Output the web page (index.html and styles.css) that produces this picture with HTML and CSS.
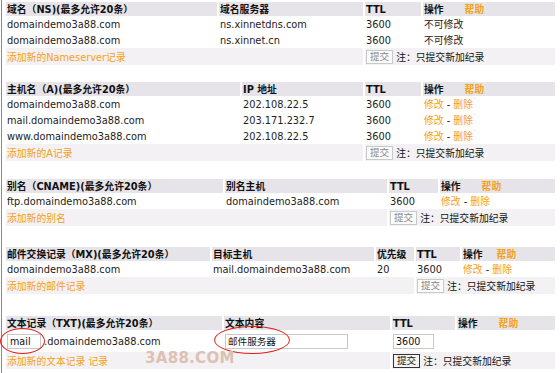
FILE: index.html
```html
<!DOCTYPE html>
<html>
<head>
  <meta charset="UTF-8">
  <title>域名解析管理</title>
  <link rel="stylesheet" href="styles.css">
</head>
<body>
<div class="page">

  <table class="dns t-ns">
    <colgroup><col class="c1"><col class="c2"><col class="c3"><col class="c4"></colgroup>
    <tr class="head">
      <th>域名（NS)(最多允许20条）</th><th>域名服务器</th><th>TTL</th><th>操作<span class="help">帮助</span></th>
    </tr>
    <tr><td>domaindemo3a88.com</td><td>ns.xinnetdns.com</td><td>3600</td><td>不可修改</td></tr>
    <tr><td>domaindemo3a88.com</td><td>ns.xinnet.cn</td><td>3600</td><td>不可修改</td></tr>
    <tr class="add">
      <td colspan="2"><a href="#">添加新的Nameserver记录</a></td>
      <td colspan="2"><button disabled>提交</button><span class="note">注：只提交新加纪录</span></td>
    </tr>
  </table>

  <table class="dns t-a">
    <colgroup><col class="c1"><col class="c2"><col class="c3"><col class="c4"></colgroup>
    <tr class="head">
      <th>主机名（A)(最多允许20条）</th><th>IP 地址</th><th>TTL</th><th>操作<span class="help">帮助</span></th>
    </tr>
    <tr><td>domaindemo3a88.com</td><td>202.108.22.5</td><td>3600</td><td><a href="#">修改</a> - <a href="#">删除</a></td></tr>
    <tr><td>mail.domaindemo3a88.com</td><td>203.171.232.7</td><td>3600</td><td><a href="#">修改</a> - <a href="#">删除</a></td></tr>
    <tr><td>www.domaindemo3a88.com</td><td>202.108.22.5</td><td>3600</td><td><a href="#">修改</a> - <a href="#">删除</a></td></tr>
    <tr class="add">
      <td colspan="2"><a href="#">添加新的A记录</a></td>
      <td colspan="2"><button disabled>提交</button><span class="note">注：只提交新加纪录</span></td>
    </tr>
  </table>

  <table class="dns t-cname">
    <colgroup><col class="c1"><col class="c2"><col class="c3"><col class="c4"></colgroup>
    <tr class="head">
      <th>别名（CNAME)(最多允许20条）</th><th>别名主机</th><th>TTL</th><th>操作<span class="help">帮助</span></th>
    </tr>
    <tr><td>ftp.domaindemo3a88.com</td><td>domaindemo3a88.com</td><td>3600</td><td><a href="#">修改</a> - <a href="#">删除</a></td></tr>
    <tr class="add">
      <td colspan="2"><a href="#">添加新的别名</a></td>
      <td colspan="2"><button disabled>提交</button><span class="note">注：只提交新加纪录</span></td>
    </tr>
  </table>

  <table class="dns t-mx">
    <colgroup><col class="c1"><col class="c2"><col class="c3"><col class="c4"><col class="c5"></colgroup>
    <tr class="head">
      <th>邮件交换记录（MX)(最多允许20条）</th><th>目标主机</th><th>优先级</th><th>TTL</th><th>操作<span class="help near">帮助</span></th>
    </tr>
    <tr><td>domaindemo3a88.com</td><td>mail.domaindemo3a88.com</td><td>20</td><td>3600</td><td><a href="#">修改</a> - <a href="#">删除</a></td></tr>
    <tr class="add">
      <td colspan="3"><a href="#">添加新的邮件记录</a></td>
      <td colspan="2"><button disabled>提交</button><span class="note">注：只提交新加纪录</span></td>
    </tr>
  </table>

  <div class="txt-wrap">
    <table class="dns t-txt">
      <colgroup><col class="c1"><col class="c2"><col class="c3"><col class="c4"></colgroup>
      <tr class="head">
        <th>文本记录（TXT)(最多允许20条）</th><th>文本内容</th><th>TTL</th><th>操作<span class="help">帮助</span></th>
      </tr>
      <tr class="edit">
        <td><input class="in-host" type="text" value="mail"> .domaindemo3a88.com</td>
        <td><input class="in-text" type="text" value="邮件服务器"></td>
        <td><input class="in-ttl" type="text" value="3600"></td>
        <td></td>
      </tr>
      <tr class="add">
        <td colspan="2"><a href="#">添加新的文本记录 记录</a></td>
        <td colspan="2"><button class="live">提交</button><span class="note">注：只提交新加纪录</span></td>
      </tr>
    </table>
    <div class="ring ring-host"></div>
    <div class="ring ring-text"></div>
    <div class="mark">3A88.COM</div>
  </div>

</div>
</body>
</html>
```

FILE: styles.css
```css
html, body { margin: 0; padding: 0; background: #fff; }
body { font-family: "DejaVu Sans", Verdana, "Noto Sans CJK SC", sans-serif; font-size: 9.8px; color: #222; }

.page { margin-left: 1px; border-left: 1px solid #8a8a8a; padding: 2px 0 0 2px; min-height: 371px; }

.dns { border-collapse: separate; border-spacing: 2px 0; table-layout: fixed; width: 553px; }
.dns th, .dns td { padding: 0 1px; text-align: left; white-space: nowrap; overflow: hidden; }
.dns th { height: 14px; background: #e6e4e8; font-weight: bold; color: #111; }
.dns td { height: 16px; }
.dns tr.add td { height: 17px; background: #f3f1f3; }

.t-ns { margin-bottom: 17px; }
.t-a { margin-bottom: 18px; }
.t-cname { margin-bottom: 21px; }
.t-mx { margin-bottom: 22px; }

.dns a { color: #f5a021; text-decoration: none; }
.help { color: #f5a021; margin-left: 21px; }
.help.near { margin-left: 14px; }

.t-ns .c1 { width: 211px; } .t-ns .c2 { width: 144px; } .t-ns .c3 { width: 56px; } .t-ns .c4 { width: 132px; }
.t-a .c1 { width: 234px; } .t-a .c2 { width: 121px; } .t-a .c3 { width: 56px; } .t-a .c4 { width: 132px; }
.t-cname .c1 { width: 217px; } .t-cname .c2 { width: 162px; } .t-cname .c3 { width: 49px; } .t-cname .c4 { width: 115px; }
.t-mx .c1 { width: 204px; } .t-mx .c2 { width: 162px; } .t-mx .c3 { width: 38px; } .t-mx .c4 { width: 44px; } .t-mx .c5 { width: 93px; }
.t-txt .c1 { width: 216px; } .t-txt .c2 { width: 166px; } .t-txt .c3 { width: 63px; } .t-txt .c4 { width: 98px; }

button { font: inherit; font-size: 9.6px; height: 14px; padding: 0 3px; margin: 0 3px 0 0; vertical-align: middle;
  background: #fbfbfb; border: 1px solid #c9c9c9; color: #888; line-height: 12px; }
button.live { border: 1px solid #333; color: #111; background: #f4f4f4; }
.note { color: #111; vertical-align: middle; }

.dns tr.edit td { height: 22px; }
input { font: inherit; font-size: 9.6px; color: #111; height: 15px; box-sizing: border-box; padding: 0 2px;
  border: 1px solid #c8c8c8; background: #fff; vertical-align: middle; margin: 0; }
.in-host { width: 34px; }
.in-text { width: 123px; }
.in-ttl { width: 41px; }

.txt-wrap { position: relative; }
.ring { position: absolute; border: 1.4px solid #e0201b; border-radius: 50%; }
.ring-host { left: -4px; top: 12px; width: 43px; height: 24px; }
.ring-text { left: 210px; top: 10px; width: 74px; height: 26px; }
.mark { position: absolute; left: 141px; top: 33px; font-family: "DejaVu Sans", sans-serif; font-weight: bold; font-size: 15px; color: #dcc1b4; letter-spacing: 0.3px; }
```
